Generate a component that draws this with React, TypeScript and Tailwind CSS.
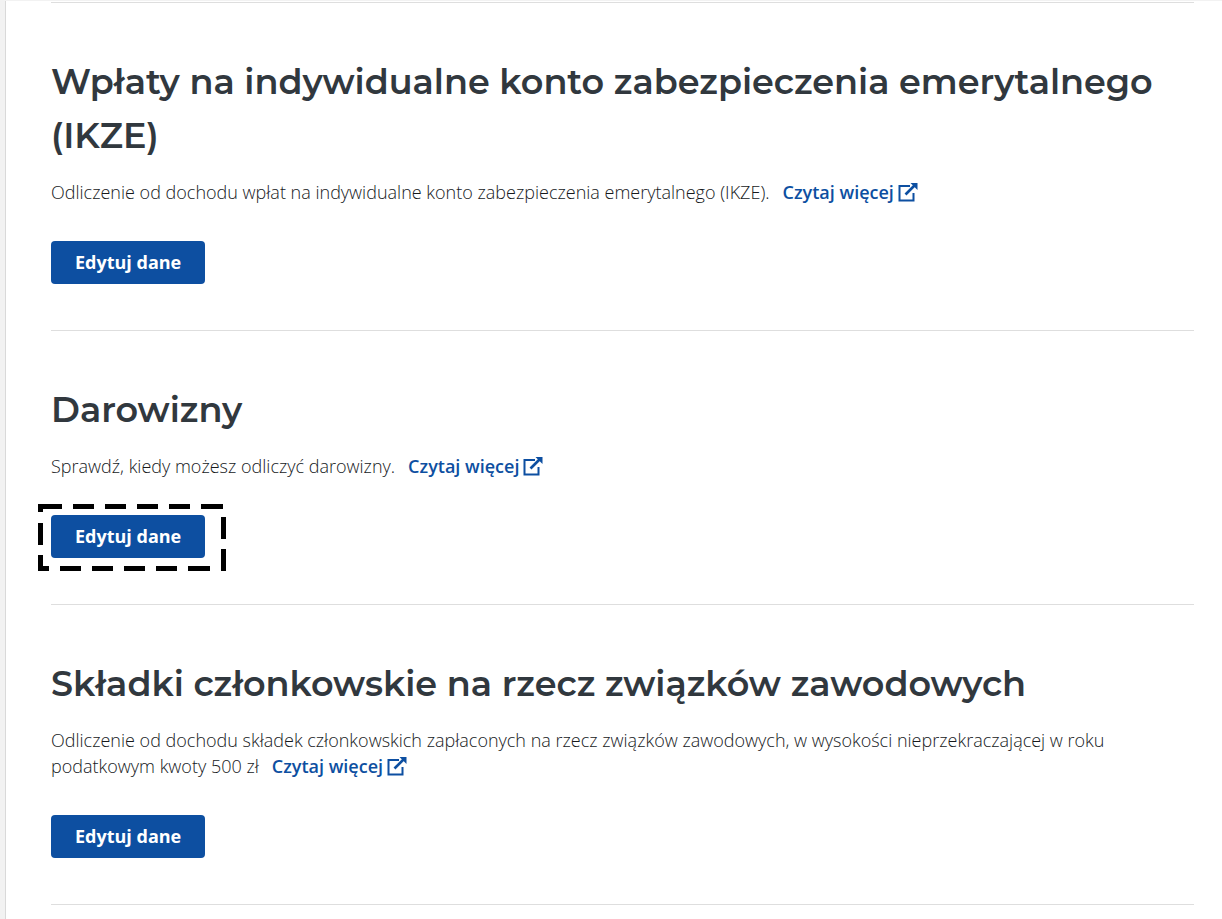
import React from "react";

type Deduction = {
  id: string;
  title: string;
  description: string;
  highlighted?: boolean;
};

const deductions: Deduction[] = [
  {
    id: "ikze",
    title: "Wpłaty na indywidualne konto zabezpieczenia emerytalnego (IKZE)",
    description:
      "Odliczenie od dochodu wpłat na indywidualne konto zabezpieczenia emerytalnego (IKZE).",
  },
  {
    id: "darowizny",
    title: "Darowizny",
    description: "Sprawdź, kiedy możesz odliczyć darowizny.",
    highlighted: true,
  },
  {
    id: "skladki",
    title: "Składki członkowskie na rzecz związków zawodowych",
    description:
      "Odliczenie od dochodu składek członkowskich zapłaconych na rzecz związków zawodowych, w wysokości nieprzekraczającej w roku podatkowym kwoty 500 zł",
  },
];

function ExternalIcon() {
  return (
    <svg
      viewBox="0 0 20 20"
      className="ml-1 inline-block size-5 align-[-3px]"
      fill="none"
      stroke="currentColor"
      strokeWidth="2"
      aria-hidden="true"
    >
      <path d="M12 4H1.5V18.5H15.5V11" />
      <path d="M7.5 12.5L17 3" strokeWidth="2.6" />
      <path d="M12.5 1H19.5V8Z" fill="currentColor" stroke="none" />
    </svg>
  );
}

function HighlightFrame() {
  return (
    <svg
      viewBox="0 0 188 67"
      className="pointer-events-none absolute -top-[11px] -left-[13px] h-[67px] w-[188px] max-w-none"
      fill="none"
      stroke="#000"
      strokeWidth="5"
      aria-hidden="true"
    >
      <path d="M0 2.5H188" strokeDasharray="24 11 21 11 21 11 21 11 21 11 22 99" />
      <path d="M185.5 13V67" strokeDasharray="22 10" />
      <path d="M0 64.5H188" strokeDasharray="11 11 21 11 21 11 21 11 21 11 22 99" />
      <path d="M2.5 0V67" strokeDasharray="8 11 22 10 16 99" />
    </svg>
  );
}

function DeductionSection({ item }: { item: Deduction }) {
  return (
    <section
      aria-labelledby={item.id}
      className="border-b border-[#dedede] pt-[52px] pb-[46px]"
    >
      <h2
        id={item.id}
        className="font-[Montserrat,Inter,sans-serif] text-[35px] leading-[54px] font-[650] text-[#31383e]"
      >
        {item.title}
      </h2>
      <p className="mt-4 text-[18px] leading-[26px] font-light text-[#16191c]">
        {item.description}
        <a
          href={`#${item.id}`}
          className="ml-[13px] font-semibold whitespace-nowrap text-[#0d4fa1]"
        >
          Czytaj więcej
          <ExternalIcon />
        </a>
      </p>
      <div className="relative mt-9 w-fit">
        <button
          type="button"
          className="block h-[43px] rounded-[4px] bg-[#0d4fa1] px-6 text-[18px] font-bold text-white"
        >
          Edytuj dane
        </button>
        {item.highlighted && <HighlightFrame />}
      </div>
    </section>
  );
}

export default function App() {
  return (
    <div className="min-h-screen border-t border-[#f2f2f2] bg-[#f2f2f2] pl-[5px] font-['Open_Sans','Noto_Sans',sans-serif]">
      <main className="min-h-[calc(100vh-1px)] border-l border-[#d9d9d9] bg-white pt-px pr-7 pb-4 pl-[45px]">
        <div className="border-t border-[#dedede]">
          {deductions.map((item) => (
            <DeductionSection key={item.id} item={item} />
          ))}
        </div>
      </main>
    </div>
  );
}
